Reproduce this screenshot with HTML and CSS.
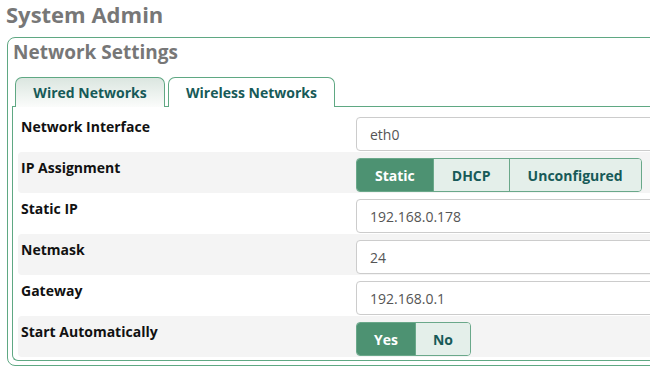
FILE: index.html
```html
<!DOCTYPE html>
<html lang="en">
<head>
    <meta charset="UTF-8">
    <meta name="viewport" content="width=device-width, initial-scale=1.0">
    <title>System Admin</title>
    <link rel="stylesheet" href="styles.css">
</head>
<body>
    <h1 class="page-title">System Admin</h1>

    <div class="settings-box">
        <h2 class="box-title">Network Settings</h2>

        <div class="tabs">
            <button class="tab tab-wired active">Wired Networks</button>
            <button class="tab tab-wireless">Wireless Networks</button>
        </div>

        <div class="tab-panel">
            <div class="row">
                <label class="row-label">Network Interface</label>
                <input class="text-input" type="text" value="eth0">
            </div>
            <div class="row row-alt row-buttons">
                <label class="row-label">IP Assignment</label>
                <div class="btn-group">
                    <button class="seg-btn selected">Static</button>
                    <button class="seg-btn">DHCP</button>
                    <button class="seg-btn">Unconfigured</button>
                </div>
            </div>
            <div class="row">
                <label class="row-label">Static IP</label>
                <input class="text-input" type="text" value="192.168.0.178">
            </div>
            <div class="row row-alt">
                <label class="row-label">Netmask</label>
                <input class="text-input" type="text" value="24">
            </div>
            <div class="row">
                <label class="row-label">Gateway</label>
                <input class="text-input" type="text" value="192.168.0.1">
            </div>
            <div class="row row-alt row-buttons">
                <label class="row-label">Start Automatically</label>
                <div class="btn-group small">
                    <button class="seg-btn selected">Yes</button>
                    <button class="seg-btn">No</button>
                </div>
            </div>
        </div>
    </div>
</body>
</html>
```

FILE: styles.css
```css
body {
    margin: 0;
    padding: 0 0 0 7px;
    background: #fff;
    font-family: "Open Sans", sans-serif;
    overflow: hidden;
    width: 800px;
}

.page-title {
    margin: 0 0 0 -1px;
    font-size: 22px;
    line-height: 28px;
    font-weight: 700;
    color: #777;
}

.settings-box {
    margin-top: 9px;
    width: 760px;
    border: 1px solid #5fa883;
    border-radius: 8px;
    padding: 0 0 4px 4px;
}

.box-title {
    margin: 2px 0 0 1px;
    font-size: 19px;
    line-height: 24px;
    font-weight: 700;
    color: #777;
}

.tabs {
    display: flex;
    gap: 3px;
    margin: 13px 0 0 3px;
    position: relative;
    z-index: 1;
}

.tab {
    height: 30px;
    padding: 0;
    border: 1px solid #5fa883;
    border-bottom: none;
    border-radius: 7px 7px 0 0;
    background: #fff;
    font-family: "Open Sans", sans-serif;
    font-size: 14px;
    font-weight: 700;
    color: #175a58;
    text-align: center;
    cursor: pointer;
}

.tab-wired {
    width: 150px;
}

.tab-wireless {
    width: 167px;
}

.tab.active {
    background: linear-gradient(#dbe6e0, #fbfcfb);
}

.tab-panel {
    margin-top: -1px;
    border: 1px solid #5fa883;
    border-right: none;
    border-radius: 0 0 0 6px;
    padding: 4px 0 3px 5px;
}

.row {
    display: grid;
    grid-template-columns: 335px 320px;
    align-items: start;
    padding: 6px 0 1px 3px;
    border-radius: 4px 0 0 4px;
}

.row-buttons {
    padding-bottom: 1px;
}

.row-alt {
    background: #f4f4f4;
}

.row-label {
    font-size: 14px;
    line-height: 20px;
    font-weight: 700;
    color: #111;
}

.text-input {
    box-sizing: border-box;
    height: 34px;
    width: 320px;
    padding: 0 13px;
    border: 1px solid #ccc;
    border-radius: 4px;
    font-family: "Open Sans", sans-serif;
    font-size: 14px;
    color: #555;
    background: #fff;
}

.btn-group {
    display: flex;
    height: 32px;
    justify-self: start;
    border: 1px solid #6aa88a;
    border-radius: 4px;
    overflow: hidden;
}

.seg-btn {
    padding: 0 18px;
    border: none;
    border-left: 1px solid #6aa88a;
    background: #e4efea;
    font-family: "Open Sans", sans-serif;
    font-size: 14px;
    font-weight: 700;
    color: #175a58;
    cursor: pointer;
}

.btn-group.small .seg-btn {
    padding: 0 17px;
}

.seg-btn:first-child {
    border-left: none;
}

.seg-btn.selected {
    background: #4d9272;
    color: #fff;
}
```
